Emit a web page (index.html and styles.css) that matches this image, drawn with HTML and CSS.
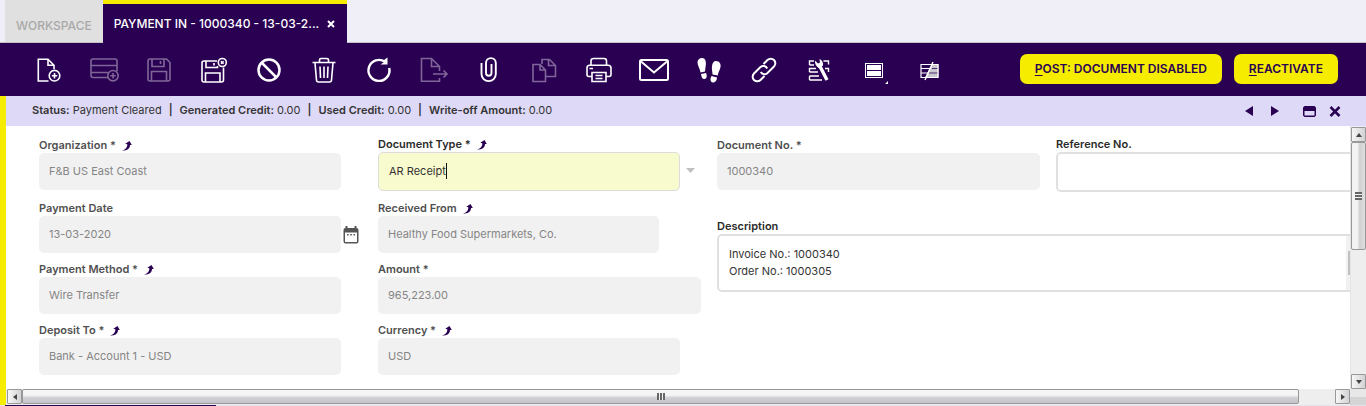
FILE: index.html
```html
<!DOCTYPE html>
<html lang="en">
<head>
<meta charset="utf-8">
<title>Payment In</title>
<link rel="stylesheet" href="styles.css">
</head>
<body>
<svg class="defs" aria-hidden="true"><symbol id="jump" viewBox="0 0 10 10"><path d="M0 9.700 3.500 9.300C6.800 8.500 8 6.500 8 4L9.800 4 7.500 0 3.300 2.800 5.300 3.300C5.500 5.500 4.500 7.500 2.500 8.500Z"/></symbol></svg>
<div class="app">
<nav class="tabs">
  <button class="tab">WORKSPACE</button>
  <div class="tab active"><span>PAYMENT IN - 1000340 - 13-03-2...</span><button class="tab-close" aria-label="Close tab"><svg width="8" height="8" viewBox="0 0 8 8"><path d="M1 1 7 7M7 1 1 7"/></svg></button></div>
</nav>
<header class="toolbar">
  <div class="tools">
    <button class="tool" aria-label="New"><svg viewBox="0 0 28 28"><path d="M13.500 25H3.300V3.300H13L19 9.300V13M13 3.300V9.300H19"/><circle cx="19.500" cy="19.700" r="5.300"/><path d="M19.500 17V22.400M16.800 19.700H22.200"/></svg></button>
    <button class="tool off" aria-label="New in grid" disabled><svg viewBox="0 0 28 28"><path d="M18 21.500H3A2 2 0 0 1 1 19.500V5A2 2 0 0 1 3 3H25A2 2 0 0 1 27 5V15M1 9.500H27M1 16.500H18"/><circle cx="23" cy="19.700" r="5.200"/><path d="M23 17V22.400M20.300 19.700H25.700"/></svg></button>
    <button class="tool off" aria-label="Save" disabled><svg viewBox="0 0 28 28"><path d="M5 3H21.500L25 6.500V23Q25 25 23 25H5Q3 25 3 23V5Q3 3 5 3ZM7 3V10.500H19V3M15.500 5V8M6.500 25V15.500H21.500V25"/></svg></button>
    <button class="tool" aria-label="Save and close"><svg viewBox="0 0 28 28"><path d="M17 5H4Q2 5 2 7V24Q2 26 4 26H21.500Q23.500 26 23.500 24V11.500M6 5V11.500H17.500V10M14 7V9.500M5.500 26V17H20V26"/><circle cx="22.300" cy="6.500" r="4"/><path d="M21 5.200 23.600 7.800M23.600 5.200 21 7.800"/></svg></button>
    <button class="tool" aria-label="Undo"><svg viewBox="0 0 28 28"><g stroke-width="2.500"><circle cx="14" cy="14" r="10.500"/><path d="M6.500 6.500 21.500 21.500"/></g></svg></button>
    <button class="tool" aria-label="Delete"><svg viewBox="0 0 28 28"><path d="M2.500 6.500H25.500M9.500 6.500V4Q9.500 2.500 11 2.500H16.500Q18.500 2.500 18.500 4V6.500M5 7 6.500 24Q6.700 26 8.500 26H19.500Q21.300 26 21.500 24L23 7M10 10.500 10.500 22M14 10.500V22M18 10.500 17.500 22"/></svg></button>
    <button class="tool" aria-label="Refresh"><svg viewBox="0 0 28 28"><path stroke-width="2.400" d="M24.200 12A10.500 10.500 0 1 1 20 5.800"/><path class="solid" d="M22.500 1.500V8.500H15.500L18.500 6.500 19 4Z"/></svg></button>
    <button class="tool off" aria-label="Export" disabled><svg viewBox="0 0 28 28"><path d="M19.500 22V25.300H1.500V2.500H11.500L19.500 10.500V15M11.500 2.500V10.500H19.500M13 18H27M23.500 14.500 27 18 23.500 21.500"/></svg></button>
    <button class="tool" aria-label="Attach"><svg viewBox="0 0 28 28"><path stroke-width="1.900" d="M6.500 7V18A7 7 0 0 0 20.800 18V7A4.500 4.500 0 0 0 11 7V17A2.400 2.400 0 0 0 16.500 17V8"/></svg></button>
    <button class="tool off" aria-label="Copy" disabled><svg viewBox="0 0 28 28"><path d="M3 8.500H10L15.500 14V25.500H3ZM10 8.500V14H15.500M12 8V3.500H19.500L25.500 9.500V20.500H16M18.500 3.500V9.500H25"/></svg></button>
    <button class="tool" aria-label="Print"><svg viewBox="0 0 28 28"><path d="M6 9V5Q6 2.500 8.500 2.500H19Q21.500 2.500 21.500 5V9M7 20.500H4Q2 20.500 2 18.500V12Q2 9.300 4.500 9.300H23Q26 9.300 26 12V18.500Q26 20.500 24 20.500H21M7 16.500H21V25.500H7ZM10.500 19.500H17.500M10.500 22.500H17.500M4.500 12.500H8"/></svg></button>
    <button class="tool" aria-label="Email"><svg class="mail" viewBox="0 0 30 28"><g stroke-width="2"><rect x="1" y="4" width="28" height="20" rx="1.500"/><path d="M2 5.500 15 16.500 28 5.500"/></g></svg></button>
    <button class="tool" aria-label="Audit trail"><svg class="filled" viewBox="0 0 28 28"><path d="M7 2C11 2 11.500 7 10.500 11L10 15.500 5.500 16.500C5 13 2.500 9 2.500 6.500 2.500 3.500 4.500 2 7 2ZM6 18 11 17C12.500 20 11.500 23 9.500 23 7 23 6.500 21 6 18ZM21 5C24.500 5 26 8 25.500 11 25 14 23 16.500 22.800 19.500L17.500 18.500C17.500 16 16.500 13 17 10 17.400 7 18.500 5 21 5ZM16.500 20 22 21.500C22 24 20.500 26.500 18 26.500 15 26.500 15 22.500 16.500 20Z"/></svg></button>
    <button class="tool" aria-label="Link"><svg viewBox="0 0 28 28"><g stroke-width="2"><path d="M13.500 8 17.500 4A4.300 4.300 0 0 1 24 10.500L17 17.500A4.300 4.300 0 0 1 10.800 16"/><path d="M14.500 20 10.500 24A4.300 4.300 0 0 1 4 17.500L10.500 11A4.300 4.300 0 0 1 17.200 12.500"/></g></svg></button>
    <button class="tool" aria-label="Customize form"><svg viewBox="0 0 28 28"><path stroke-width="1.400" d="M4.500 9V5H9M4.500 9H9M18.500 5H23.500V8.500M4.500 16V12.500H11M4.500 16H13M20 12.500H23.500V16M4.500 20H14M4.500 24H17M4.500 20V24"/><path stroke-width="3.400" d="M14.500 9.500 22 24"/><path class="solid" d="M10 4.500 13 7.500 15 6.500 14.500 3Q18.500 4.500 18 9.500L14.500 12.500Q9.500 10 10 4.500Z"/></svg></button>
    <button class="tool" aria-label="Form layout"><svg viewBox="0 0 28 28"><rect x="5.500" y="7.500" width="17" height="14" stroke-width="1"/><path class="solid" d="M7 9H21V14H7ZM7 15H21V20H7ZM25 28 28 25V28Z"/></svg></button>
    <button class="tool" aria-label="Grid edit"><svg viewBox="0 0 28 28"><path class="shade" d="M17 8H23.500V21.500H10Z"/><path class="lines" d="M17 12.500H23M14 17H23"/><path stroke-width="1.200" d="M6 8.500H23V21.500H6ZM6 12.500H15M6 17H13"/><path stroke-width="1.400" d="M18 6 10 24"/></svg></button>
  </div>
  <div class="actions">
    <button class="action"><u>P</u>OST: DOCUMENT DISABLED</button>
    <button class="action"><u>R</u>EACTIVATE</button>
  </div>
</header>
<main class="view">
  <div class="status">
    <p><b>Status:</b> Payment Cleared<b class="sep">|</b><b>Generated Credit:</b> 0.00<b class="sep">|</b><b>Used Credit:</b> 0.00<b class="sep">|</b><b>Write-off Amount:</b> 0.00</p>
    <div class="window-tools">
      <button aria-label="Previous"><svg width="8" height="10" viewBox="0 0 8 10"><path d="M8 0V10L0 5Z"/></svg></button>
      <button aria-label="Next"><svg width="8" height="10" viewBox="0 0 8 10"><path d="M0 0V10L8 5Z"/></svg></button>
      <button class="restore" aria-label="Restore"><svg width="13" height="11" viewBox="0 0 13 11"><path fill-rule="evenodd" d="M1.500 0H11.500L13 1.500V9.500L11.500 11H1.500L0 9.500V1.500ZM1.500 5V9.500H11.500V5Z"/></svg></button>
      <button aria-label="Close"><svg width="12" height="11" viewBox="0 0 12 11"><path class="x" d="M1.500 1 10.500 10M10.500 1 1.500 10"/></svg></button>
    </div>
  </div>
  <div class="scroller">
    <form class="form">
      <div class="grid">
        <div class="field read"><label for="org">Organization * <svg class="jump"><use href="#jump"/></svg></label><input id="org" value="F&amp;B US East Coast" readonly></div>
        <div class="field focus"><label for="type">Document Type * <svg class="jump"><use href="#jump"/></svg></label><div class="combo"><input id="type" value="AR Receipt"><span class="measure" aria-hidden="true">AR Receipt</span><button type="button" class="picker drop" aria-label="Show options"><svg width="9" height="5" viewBox="0 0 9 5"><path d="M0 0H9L4.500 5Z"/></svg></button></div></div>
        <div class="field read wide"><label for="no">Document No. *</label><input id="no" value="1000340" readonly></div>
        <div class="field wide edit"><label for="ref">Reference No.</label><input id="ref"></div>
        <div class="field read"><label for="date">Payment Date</label><div class="combo"><input id="date" value="13-03-2020" readonly><button type="button" class="picker" aria-label="Choose date"><svg width="16" height="18" viewBox="0 0 16 18"><path fill-rule="evenodd" d="M2.500 0H4.500V2H11.500V0H13.500V2Q15.500 2 15.500 4V15.500Q15.500 17.500 13.500 17.500H2.500Q.5 17.500.5 15.500V4Q.5 2 2.500 2ZM2 6.500V16H14V6.500ZM4 8H5.500V9.500H4ZM7.200 8H8.800V9.500H7.200ZM10.500 8H12V9.500H10.500Z"/></svg></button></div></div>
        <div class="field read lookup"><label for="from">Received From <svg class="jump"><use href="#jump"/></svg></label><input id="from" value="Healthy Food Supermarkets, Co." readonly></div>
        <div class="field description"><label for="desc">Description</label><div class="area"><textarea id="desc">Invoice No.: 1000340
Order No.: 1000305</textarea><i class="area-bar"></i></div></div>
        <div class="field read"><label for="method">Payment Method * <svg class="jump"><use href="#jump"/></svg></label><input id="method" value="Wire Transfer" readonly></div>
        <div class="field read wide"><label for="amount">Amount *</label><input id="amount" value="965,223.00" readonly></div>
        <div class="field read"><label for="deposit">Deposit To * <svg class="jump"><use href="#jump"/></svg></label><input id="deposit" value="Bank - Account 1 - USD" readonly></div>
        <div class="field read"><label for="cur">Currency * <svg class="jump"><use href="#jump"/></svg></label><input id="cur" value="USD" readonly></div>
      </div>
    </form>
    <div class="vbar"><button class="sb" aria-label="Scroll up"><svg viewBox="0 0 8 8"><path d="M4 2 7 6H1Z"/></svg></button><div class="thumb"><i></i></div><button class="sb end" aria-label="Scroll down"><svg viewBox="0 0 8 8"><path d="M1 2H7L4 6Z"/></svg></button></div>
    <div class="hbar"><button class="sb" aria-label="Scroll left"><svg viewBox="0 0 8 8"><path d="M6 1V7L2 4Z"/></svg></button><div class="track"><div class="thumb"><i></i></div></div><button class="sb" aria-label="Scroll right"><svg viewBox="0 0 8 8"><path d="M2 1V7L6 4Z"/></svg></button></div>
    <div class="corner"></div>
  </div>
</main>
<footer class="subtabs"><i class="current"></i></footer>
</div>
</body>
</html>
```

FILE: styles.css
```css
* { box-sizing: border-box; }
body { margin: 0; font-family: Inter, "Open Sans", sans-serif; font-size: 11px; color: #333; background: #fff; overflow: hidden; }
button { border: 0; padding: 0; background: none; font: inherit; color: inherit; display: flex; align-items: center; justify-content: center; }
.defs { display: none; }
.app { height: 100vh; display: flex; flex-direction: column; }

.tabs { display: flex; height: 43px; padding-left: 5px; background: #f0eff8; border-bottom: 1px solid #c4c4c8; flex: none; }
.tab { padding: 8px 11px 0; background: #e0e0e0; color: #a9a9a9; font-size: 12px; font-weight: 500; }
.tab.active { display: flex; align-items: center; gap: 8px; height: 43px; padding: 0 12px 0 11px; border-top: 4px solid #f5ec00; background: #2a0053; color: #fff; white-space: nowrap; }
.tab-close svg { stroke: #fff; stroke-width: 2; display: block; }

.toolbar { display: flex; align-items: center; height: 53px; padding: 0 28px 0 21px; background: #2a0053; flex: none; }
.tools { display: flex; flex: none; }
.tool { width: 55px; height: 53px; }
.tool svg { width: 28px; height: 28px; fill: none; stroke: #fff; stroke-width: 1.600; overflow: visible; flex: none; }
.tool svg.mail { width: 30px; }
.tool.off { opacity: .4; }
.tool svg.filled, .tool .solid { fill: #fff; stroke: none; }
.tool .shade { fill: #ccc8d2; stroke: none; }
.tool .lines { stroke: #4b2a6c; stroke-width: 1; }
.actions { display: flex; gap: 12px; margin-left: auto; }
.action { display: block; height: 30px; margin-bottom: 2px; padding: 0 15px; border-radius: 7px; background: #f5ec00; color: #2a0053; font-size: 12px; font-weight: 600; white-space: nowrap; }
.action u { text-underline-offset: 2px; }

.view { display: flex; flex-direction: column; flex: 1; min-height: 0; border-left: 6px solid #f5ec00; }
.status { display: flex; align-items: center; height: 30px; padding: 0 25px 0 26px; background: #ded9f6; flex: none; }
.status p { margin: 0 0 2px; }
.status b { font-weight: 600; }
.status .sep { margin: 0 7px; }
.window-tools { display: flex; align-items: center; gap: 18px; margin-left: auto; fill: #2a0053; }
.window-tools .restore { margin: 0 -5px 0 6px; }
.window-tools .x { stroke: #2a0053; stroke-width: 2.500; }

.scroller { display: grid; grid-template: 1fr 16px / 1fr 16px; flex: 1; min-height: 0; }
.form { overflow: hidden; background: #fff; }
.grid { display: grid; grid-template: 56px auto auto auto / repeat(4, 1fr); row-gap: 7px; align-items: start; width: calc(100% + 45px); padding: 10px 0 0 33px; }
.field { padding-right: 37px; }
.read { padding-top: 1px; }
.wide { padding-right: 16px; }
.lookup { padding-right: 58px; }
.field label { display: flex; align-items: center; gap: 6px; height: 16px; font-weight: 600; color: #2b2b2b; white-space: nowrap; }
.read label { color: #505050; }
.jump { width: 10px; height: 10px; margin-top: 2px; fill: #2a0053; }
.field input { display: block; width: 100%; height: 37px; padding: 0 10px 2px; border: 0; border-radius: 5px; outline: 0; background: #f1f1f1; font: inherit; color: #858585; }
.field.focus input { height: 39px; border: 1px solid #dcdcdc; background: #f8fbcd; color: #333; }
.field.edit input { height: 40px; border: 2px solid #e0e0e0; background: #fff; }
.combo { position: relative; }
.measure { position: absolute; left: 11px; top: 11px; height: 16px; border-right: 1px solid #111; color: transparent; overflow: hidden; user-select: none; }
.picker { position: absolute; left: 100%; top: 0; height: 37px; padding-left: 2px; fill: #555; }
.drop { padding-left: 6px; fill: #c0c0c0; }
.description { grid-column: 3 / 5; grid-row: 2 / 4; margin-top: 19px; padding-right: 30px; }
.area { position: relative; }
.description textarea { display: block; width: 100%; height: 58px; padding: 10px; border: 2px solid #e0e0e0; border-radius: 5px; outline: 0; resize: none; overflow: hidden; font: inherit; line-height: 17px; color: #333; }
.area-bar { position: absolute; right: 2px; top: 2px; bottom: 2px; width: 17px; background: #f1f1f1; }
.area-bar::after { content: ""; position: absolute; left: 2px; right: 2px; top: 15px; height: 24px; background: #c1c1c1; }

.vbar { display: flex; flex-direction: column; padding-top: 1px; background: #eee; border-left: 1px solid #e4e4e4; }
.hbar { display: flex; padding-left: 1px; background: #eee; }
.sb { width: 15px; height: 15px; border: 1px solid #989898; border-radius: 1px; background: linear-gradient(90deg, #f6f6f6, #d2d2d6); flex: none; }
.sb svg { width: 8px; height: 8px; fill: #444; }
.sb.end { margin-top: auto; }
.thumb { display: flex; align-items: center; justify-content: center; border: 1px solid #989898; border-radius: 2px; }
.vbar .thumb { width: 15px; height: 108px; background: linear-gradient(90deg, #f3f3f3 0 40%, #d0d0d0 60%, #dedede); }
.vbar .thumb i { width: 7px; height: 8px; background: repeating-linear-gradient(#666 0 2px, #f2f2f2 2px 3px); }
.track { display: flex; flex: 1; }
.hbar .thumb { width: calc(100% - 36px); height: 15px; background: linear-gradient(#f5f5f5 0 40%, #cfcfd4 60%, #c4c4ca); }
.hbar .thumb i { width: 8px; height: 7px; background: repeating-linear-gradient(90deg, #666 0 2px, #f2f2f2 2px 3px); }
.corner { background: linear-gradient(#e8e8e8 50%, #d4d4d4 50%); }
.subtabs { display: flex; height: 1px; padding-left: 5px; background: #e4e4e8; flex: none; }
.current { width: 211px; background: #2a0053; }
```
